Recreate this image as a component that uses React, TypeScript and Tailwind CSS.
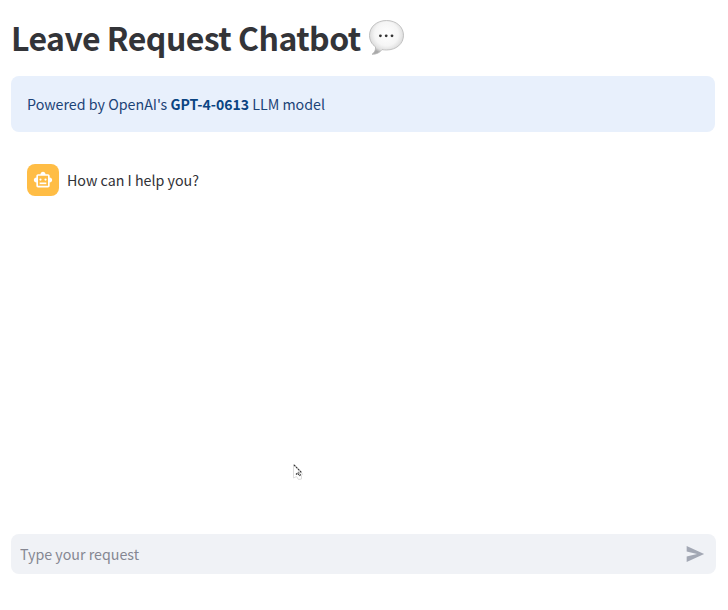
import React from "react";

function SpeechBubble() {
  return (
    <svg className="mt-[19px] ml-[7px] h-[37px] w-[37px] shrink-0" viewBox="0 0 37 37" aria-hidden="true">
      <defs>
        <radialGradient id="bubble" cx="0.5" cy="0.4" r="0.58">
          <stop offset="0" stopColor="#ffffff" />
          <stop offset="0.6" stopColor="#f5f5f5" />
          <stop offset="0.85" stopColor="#dedede" />
          <stop offset="1" stopColor="#a9a9a9" />
        </radialGradient>
      </defs>
      <path
        d="M18.5 1.5C8.7 1.5 1.5 8 1.5 16.3c0 4.900 2.300 9 6 11.500.4 3.200-.9 5.700-3.500 7.500 4.200.2 7.900-1.600 10-4.700 1.400.3 2.900.4 4.500.4 9.800 0 17-6.300 17-14.700S28.300 1.500 18.500 1.500z"
        fill="url(#bubble)"
        stroke="#b5b5b5"
        strokeWidth="0.8"
      />
      <circle cx="12.400" cy="16.800" r="1.400" fill="#333" />
      <circle cx="18.200" cy="16.800" r="1.400" fill="#333" />
      <circle cx="24" cy="16.800" r="1.400" fill="#333" />
    </svg>
  );
}

function RobotAvatar() {
  return (
    <div className="flex size-8 items-center justify-center rounded-lg bg-[#ffbd45]">
      <svg className="size-5 text-white" viewBox="0 0 24 24" fill="currentColor" aria-hidden="true">
        <path d="M20 9V7c0-1.100-.9-2-2-2h-3c0-1.660-1.340-3-3-3S9 3.340 9 5H6c-1.100 0-2 .9-2 2v2c-1.660 0-3 1.340-3 3s1.340 3 3 3v4c0 1.100.9 2 2 2h12c1.100 0 2-.9 2-2v-4c1.660 0 3-1.340 3-3s-1.340-3-3-3zm-2 10H6V7h12v12z" />
        <circle cx="9" cy="11.500" r="1.300" />
        <circle cx="15" cy="11.500" r="1.300" />
        <path d="M8 15h8v2H8z" />
      </svg>
    </div>
  );
}

function Pointer() {
  return (
    <svg className="absolute top-[462px] left-[290px] h-5 w-4" viewBox="0 0 16 20" aria-hidden="true">
      <path d="M3.500 2v14l3-1.500 2 3 3-.5v-3.500l1-1.500z" fill="#fff" stroke="#dcdcdc" />
      <path d="M4 3l7.500 7.500M6 12.500l2.500-2.500M8 13l2-2.500M9.500 14l1.500-2" fill="none" stroke="#333" strokeWidth="1.100" strokeDasharray="2 .8" />
    </svg>
  );
}

export default function App() {
  return (
    <main className="relative flex h-[610px] w-[728px] flex-col overflow-hidden bg-white pr-[13px] pl-[11px] font-['Noto_Sans_CJK_SC',sans-serif] text-[14.25px] text-[#303136]">
      <header className="flex h-[76px] shrink-0">
        <h1 className="mt-[13px] text-[32px] leading-[48px] font-bold tracking-[-0.54px] whitespace-nowrap text-[#333438]">Leave Request Chatbot</h1>
        <SpeechBubble />
      </header>
      <section className="flex h-14 shrink-0 items-center rounded-lg bg-[#e8f0fc] px-4 text-[#1c4377]">
        <p className="whitespace-pre">Powered by OpenAI's <strong className="text-[14px] font-bold text-[#0a4482]">GPT-4-0613</strong> LLM model</p>
      </section>
      <section className="mt-8 flex grow items-start gap-2 px-4">
        <RobotAvatar />
        <p className="leading-8">How can I help you?</p>
      </section>
      <form className="-mr-px mb-9 flex h-10 shrink-0 items-center rounded-lg bg-[#f0f2f6] pr-[11px] pl-[9px]">
        <input aria-label="Your request" placeholder="Type your request" className="min-w-0 grow bg-transparent outline-none placeholder:text-[#858792]" />
        <button type="button" aria-label="Send">
          <svg className="size-5 text-[#a3a8b4]" viewBox="0 0 24 24" fill="currentColor" aria-hidden="true">
            <path d="M2 21.500l21-9.500L2 2.500v6.500l12.500 3L2 15z" />
          </svg>
        </button>
      </form>
      <Pointer />
    </main>
  );
}
